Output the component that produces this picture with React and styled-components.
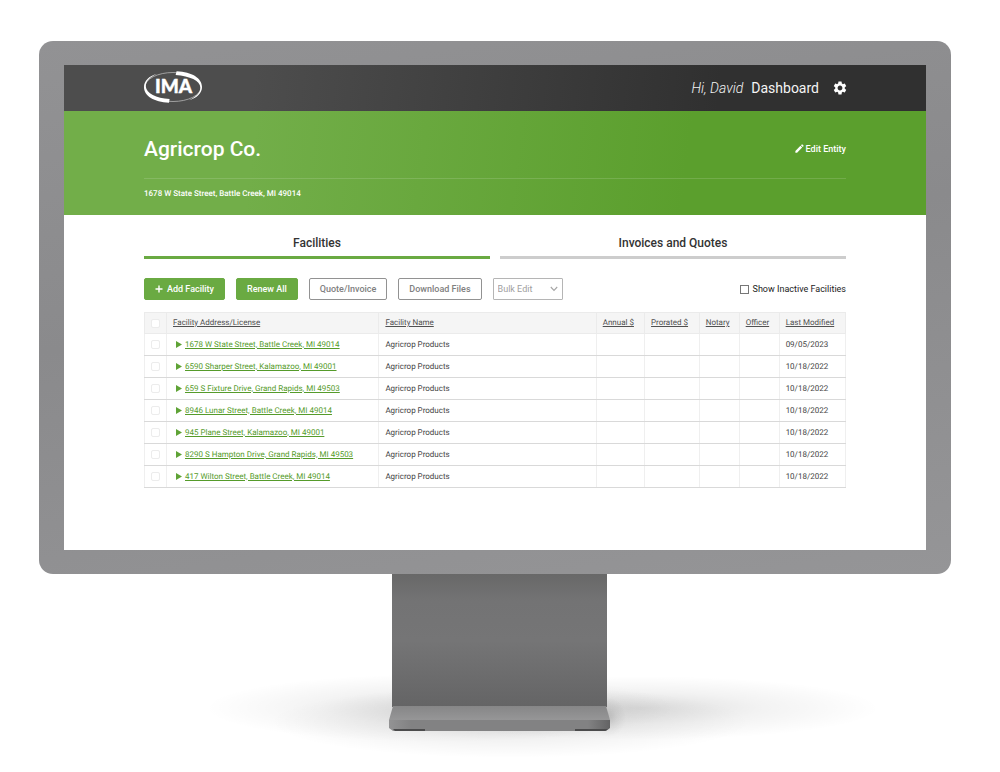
import React, { useState } from "react";
import styled, { createGlobalStyle } from "styled-components";
import { MdEdit, MdSettings } from "react-icons/md";

const GlobalStyle = createGlobalStyle`
  *, *::before, *::after { box-sizing: border-box; }
  body {
    margin: 0;
    background: #fff;
    color: #555;
    font-family: Roboto, "Liberation Sans", sans-serif;
  }
  button, select, input { font: inherit; margin: 0; }
`;

const Page = styled.div`
  display: flex;
  flex-direction: column;
  padding-top: 41px;
`;

const Monitor = styled.div`
  margin: 0 49px 0 39px;
  padding: 24px 25px;
  border-radius: 14px;
  background: linear-gradient(170deg, #929294 0%, #8a8a8c 45%, #959597 100%);
`;

const Screen = styled.div`
  background: #fff;
`;

const TopBar = styled.header`
  display: flex;
  align-items: center;
  justify-content: space-between;
  height: 46px;
  padding: 0 80px;
  color: #f4f4f4;
  background: linear-gradient(97deg, #4d4d4d 22%, #303030 76%);
`;

const Logo = styled.svg`
  display: block;
  width: 58px;
  height: 32px;
  margin-bottom: 3px;
`;

const UserNav = styled.nav`
  display: flex;
  align-items: center;
  gap: 8px;
  margin-right: -2px;
  font-size: 14px;
  line-height: 20px;
`;

const Greeting = styled.span`
  font-style: italic;
  font-weight: 300;
`;

const NavLink = styled.a`
  color: inherit;
  text-decoration: none;
`;

const IconButton = styled.button`
  display: flex;
  margin-left: 5px;
  padding: 0;
  border: 0;
  background: none;
  color: #fff;
  font-size: 16px;
  cursor: pointer;
`;

const Banner = styled.section`
  height: 104px;
  padding: 0 80px;
  color: #fff;
  background: linear-gradient(97deg, #72ae49 22%, #5b9f2d 72%);
`;

const BannerRow = styled.div`
  display: flex;
  align-items: center;
  justify-content: space-between;
  height: 68px;
  padding-top: 8px;
  border-bottom: 1px solid rgba(255, 255, 255, 0.14);
`;

const Title = styled.h1`
  margin: 0;
  font-size: 21px;
  line-height: 28px;
  font-weight: 500;
`;

const EditLink = styled.a`
  display: flex;
  align-items: center;
  gap: 1px;
  color: #fff;
  font-size: 9px;
  line-height: 12px;
  font-weight: 500;
  text-decoration: none;

  svg { font-size: 11px; }
`;

const Address = styled.p`
  margin: 0;
  padding-top: 9px;
  font-size: 8px;
  line-height: 12px;
  font-weight: 500;
  text-rendering: geometricPrecision;
`;

const Content = styled.main`
  padding: 14px 80px 62px;
`;

const Tabs = styled.div`
  display: flex;
  gap: 10px;
`;

const Tab = styled.button`
  flex: 1;
  padding: 1px 0 0;
  border: 0;
  border-bottom: 3px solid ${(p) => (p.$active ? "#6aaa42" : "#cdcdcd")};
  background: none;
  color: #333;
  font-size: 12px;
  line-height: 26px;
  font-weight: 500;
  cursor: pointer;
`;

const Toolbar = styled.div`
  display: flex;
  align-items: center;
  gap: 11px;
  margin: 19px 0 12px;
`;

const Button = styled.button`
  display: flex;
  align-items: center;
  justify-content: center;
  gap: 4px;
  height: 22px;
  padding: 0 10px;
  border: 1px solid ${(p) => (p.$primary ? "#6aaa42" : "#929292")};
  border-radius: 2px;
  background: ${(p) => (p.$primary ? "#6aaa42" : "#fff")};
  color: ${(p) => (p.$primary ? "#fff" : "#808080")};
  font-size: 9px;
  font-weight: 500;
  white-space: nowrap;
  cursor: pointer;
`;

const SelectWrap = styled.div`
  display: grid;
  align-items: center;

  > * { grid-area: 1 / 1; }
  svg {
    justify-self: end;
    margin-right: 5px;
    pointer-events: none;
  }
`;

const Select = styled.select`
  appearance: none;
  width: 70px;
  height: 22px;
  padding: 0 4px;
  border: 1px solid #b5b5b5;
  border-radius: 1px;
  background: #fff;
  color: #a0a0a0;
  font-size: 9px;
`;

const CheckLabel = styled.label`
  display: flex;
  align-items: center;
  gap: 4px;
  margin-left: auto;
  color: #222;
  font-size: 9px;
  line-height: 12px;
`;

const Checkbox = styled.input`
  appearance: none;
  display: block;
  width: 9px;
  height: 9px;
  border: 1px solid ${(p) => (p.$faint ? "#ececec" : "#777")};
  border-radius: ${(p) => (p.$faint ? "2px" : "0")};
  background: #fff;

  &:checked { background: #6aaa42; }
`;

const Table = styled.table`
  width: 100%;
  table-layout: fixed;
  border-collapse: collapse;
  font-size: 8px;
  line-height: 12px;
  color: #444;
  text-rendering: geometricPrecision;
`;

const Col = styled.col`
  width: ${(p) => p.$width};
`;

const HeadCell = styled.th`
  height: 21px;
  padding: 0 6px;
  border: 1px solid #ebebeb;
  background: #f5f5f5;
  color: #505050;
  font-weight: 400;
  text-align: left;
  text-decoration: underline;
  white-space: nowrap;
`;

const Cell = styled.td`
  height: 22px;
  padding: 0 6px;
  border: 1px solid #efefef;
  border-bottom-color: #d9d9d9;
  border-top-color: #d9d9d9;
  white-space: nowrap;
`;

const FacilityLine = styled.div`
  display: flex;
  align-items: center;
  gap: 3px;
  padding-left: 3px;
`;

const Expander = styled.button`
  display: flex;
  padding: 0;
  border: 0;
  background: none;
  color: #5fa336;
  cursor: pointer;
`;

const FacilityLink = styled.a`
  color: #559b2a;
  text-decoration: underline;
`;

const Stand = styled.svg`
  display: block;
  align-self: center;
  width: 800px;
  max-width: 100%;
`;

const COLUMNS = [
  { label: "Facility Address/License", width: "30.3%" },
  { label: "Facility Name", width: "31%" },
  { label: "Annual $", width: "6.9%" },
  { label: "Prorated $", width: "7.8%" },
  { label: "Notary", width: "5.7%" },
  { label: "Officer", width: "5.7%" },
  { label: "Last Modified", width: "auto" },
];

const FACILITIES = [
  ["1678 W State Street, Battle Creek, MI 49014", "09/05/2023"],
  ["6590 Sharper Street, Kalamazoo, MI 49001", "10/18/2022"],
  ["659 S Fixture Drive, Grand Rapids, MI 49503", "10/18/2022"],
  ["8946 Lunar Street, Battle Creek, MI 49014", "10/18/2022"],
  ["945 Plane Street, Kalamazoo, MI 49001", "10/18/2022"],
  ["8290 S Hampton Drive, Grand Rapids, MI 49503", "10/18/2022"],
  ["417 Wilton Street, Battle Creek, MI 49014", "10/18/2022"],
];

function ImaLogo() {
  return (
    <Logo viewBox="0 0 58 32" role="img" aria-label="IMA">
      <ellipse cx="29" cy="16" rx="28" ry="14.5" fill="none" stroke="#b5b5b5" strokeWidth="0.8" />
      <path d="M32.6 0.2 C48 1 58 7 58 16 C58 22 53 27 45 29.2 C52 26 56.6 21.5 56.4 16.5 C56 9.5 46 5.2 31.6 4 Z" fill="#fff" />
      <path d="M25 31.8 C10 31 0 25 0 16 C0 10 5 5 13 2.8 C6 6 1.6 10.5 1.8 15.5 C2.4 22.6 12 27.2 25.6 28 Z" fill="#fff" />
      <text x="29.5" y="22" textAnchor="middle" fill="#fff" stroke="#fff" strokeWidth="0.4" fontFamily="Lato, sans-serif" fontWeight="900" fontSize="19">IMA</text>
    </Logo>
  );
}

function MonitorStand() {
  return (
    <Stand viewBox="0 0 800 198" aria-hidden="true">
      <defs>
        <linearGradient id="neck" x1="0" y1="0" x2="0" y2="1">
          <stop offset="0" stopColor="#686868" />
          <stop offset="0.2" stopColor="#737374" />
          <stop offset="0.5" stopColor="#757576" />
          <stop offset="1" stopColor="#646465" />
        </linearGradient>
        <linearGradient id="foot" x1="0" y1="0" x2="0" y2="1">
          <stop offset="0" stopColor="#868687" />
          <stop offset="1" stopColor="#969697" />
        </linearGradient>
        <linearGradient id="lip" x1="0" y1="0" x2="1" y2="0">
          <stop offset="0" stopColor="#939394" />
          <stop offset="0.1" stopColor="#828283" />
          <stop offset="0.9" stopColor="#828283" />
          <stop offset="1" stopColor="#636364" />
        </linearGradient>
        <radialGradient id="shade">
          <stop offset="0" stopColor="#000" stopOpacity="0.13" />
          <stop offset="0.5" stopColor="#000" stopOpacity="0.05" />
          <stop offset="0.8" stopColor="#000" stopOpacity="0.02" />
          <stop offset="1" stopColor="#000" stopOpacity="0" />
        </radialGradient>
      </defs>
      <ellipse cx="340" cy="134" rx="235" ry="34" fill="url(#shade)" />
      <ellipse cx="540" cy="134" rx="240" ry="32" fill="url(#shade)" />
      <ellipse cx="410" cy="148" rx="240" ry="36" fill="url(#shade)" />
      <ellipse cx="508" cy="143" rx="18" ry="20" fill="url(#shade)" />
      <rect x="292" y="0" width="215" height="133" fill="url(#neck)" />
      <path d="M293 132 H506 L510 146 H289 Z" fill="url(#foot)" />
      <path d="M289 146 H510 V154 L506 157 H293 L289 154 Z" fill="url(#lip)" />
      <path d="M293 155 H325 V157 H295 Z M475 155 H508 L505 157 H475 Z" fill="#4b4b4c" />
    </Stand>
  );
}

export default function App() {
  const [tab, setTab] = useState("Facilities");

  return (
    <>
      <GlobalStyle />
      <Page>
        <Monitor>
          <Screen>
            <TopBar>
              <ImaLogo />
              <UserNav>
                <Greeting>Hi, David</Greeting>
                <NavLink href="#dashboard">Dashboard</NavLink>
                <IconButton type="button" aria-label="Settings">
                  <MdSettings />
                </IconButton>
              </UserNav>
            </TopBar>
            <Banner>
              <BannerRow>
                <Title>Agricrop Co.</Title>
                <EditLink href="#edit">
                  <MdEdit />
                  Edit Entity
                </EditLink>
              </BannerRow>
              <Address>1678 W State Street, Battle Creek, MI 49014</Address>
            </Banner>
            <Content>
              <Tabs role="tablist">
                {["Facilities", "Invoices and Quotes"].map((name) => (
                  <Tab
                    key={name}
                    type="button"
                    role="tab"
                    aria-selected={tab === name}
                    $active={tab === name}
                    onClick={() => setTab(name)}
                  >
                    {name}
                  </Tab>
                ))}
              </Tabs>
              <Toolbar>
                <Button type="button" $primary>
                  <svg width="8" height="8" viewBox="0 0 8 8" aria-hidden="true">
                    <path d="M4 0.5 V7.5 M0.5 4 H7.5" stroke="currentColor" strokeWidth="1.4" />
                  </svg>
                  Add Facility
                </Button>
                <Button type="button" $primary>Renew All</Button>
                <Button type="button">Quote/Invoice</Button>
                <Button type="button">Download Files</Button>
                <SelectWrap>
                  <Select aria-label="Bulk Edit" defaultValue="">
                    <option value="">Bulk Edit</option>
                  </Select>
                  <svg width="8" height="6" viewBox="0 0 8 6" aria-hidden="true">
                    <path d="M0.8 1 L4 4.4 L7.2 1" fill="none" stroke="#a5a5a5" strokeWidth="1.1" />
                  </svg>
                </SelectWrap>
                <CheckLabel>
                  <Checkbox type="checkbox" />
                  Show Inactive Facilities
                </CheckLabel>
              </Toolbar>
              <Table>
                <colgroup>
                  <Col $width="22px" />
                  {COLUMNS.map((c) => (
                    <Col key={c.label} $width={c.width} />
                  ))}
                </colgroup>
                <thead>
                  <tr>
                    <HeadCell>
                      <Checkbox type="checkbox" aria-label="Select all facilities" $faint />
                    </HeadCell>
                    {COLUMNS.map((c) => (
                      <HeadCell key={c.label}>{c.label}</HeadCell>
                    ))}
                  </tr>
                </thead>
                <tbody>
                  {FACILITIES.map(([address, modified]) => (
                    <tr key={address}>
                      <Cell>
                        <Checkbox type="checkbox" aria-label={`Select ${address}`} $faint />
                      </Cell>
                      <Cell>
                        <FacilityLine>
                          <Expander type="button" aria-label={`Expand ${address}`}>
                            <svg width="6" height="7" viewBox="0 0 6 7" aria-hidden="true">
                              <path d="M0 0 L6 3.5 L0 7 Z" fill="currentColor" />
                            </svg>
                          </Expander>
                          <FacilityLink href="#facility">{address}</FacilityLink>
                        </FacilityLine>
                      </Cell>
                      <Cell>Agricrop Products</Cell>
                      <Cell />
                      <Cell />
                      <Cell />
                      <Cell />
                      <Cell>{modified}</Cell>
                    </tr>
                  ))}
                </tbody>
              </Table>
            </Content>
          </Screen>
        </Monitor>
        <MonitorStand />
      </Page>
    </>
  );
}
